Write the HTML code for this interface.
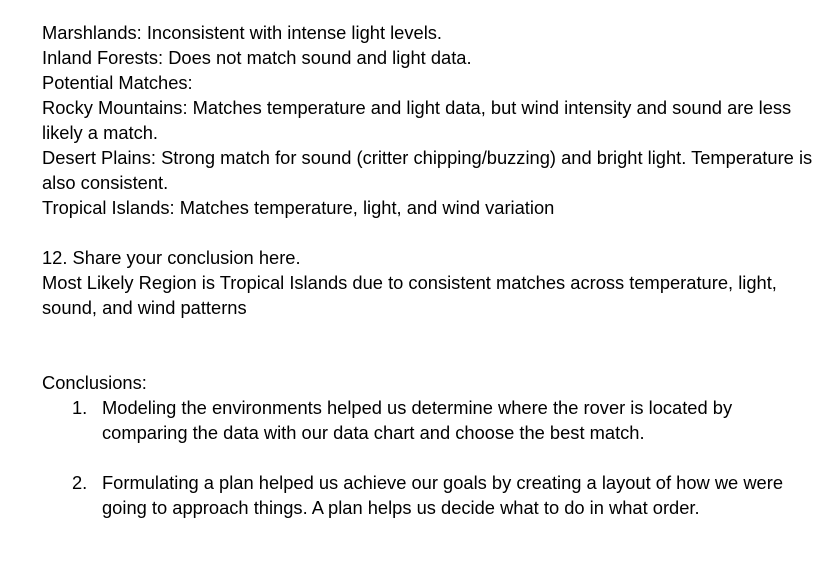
<!DOCTYPE html>
<html><head><meta charset="utf-8"><style>
html,body{margin:0;padding:0;background:#fff;}
body{width:831px;height:561px;overflow:hidden;font-family:"Liberation Sans",Arial,sans-serif;font-size:18.32px;line-height:25px;color:#000;}
.c{position:absolute;left:42px;top:20px;width:800px;white-space:nowrap;}
p{margin:0;}
.li{position:relative;padding-left:60px;}
.li span{position:absolute;left:30px;}
</style></head><body><div class="c">
<p>Marshlands: Inconsistent with intense light levels.</p>
<p>Inland Forests: Does not match sound and light data.</p>
<p>Potential Matches:</p>
<p>Rocky Mountains: Matches temperature and light data, but wind intensity and sound are less<br>likely a match.</p>
<p>Desert Plains: Strong match for sound (critter chipping/buzzing) and bright light. Temperature is<br>also consistent.</p>
<p>Tropical Islands: Matches temperature, light, and wind variation</p>
<p>&nbsp;</p>
<p>12. Share your conclusion here.</p>
<p>Most Likely Region is Tropical Islands due to consistent matches across temperature, light,<br>sound, and wind patterns</p>
<p>&nbsp;</p>
<p>&nbsp;</p>
<p>Conclusions:</p>
<p class="li"><span>1.</span>Modeling the environments helped us determine where the rover is located by<br>comparing the data with our data chart and choose the best match.</p>
<p>&nbsp;</p>
<p class="li"><span>2.</span>Formulating a plan helped us achieve our goals by creating a layout of how we were<br>going to approach things. A plan helps us decide what to do in what order.</p>
</div></body></html>
